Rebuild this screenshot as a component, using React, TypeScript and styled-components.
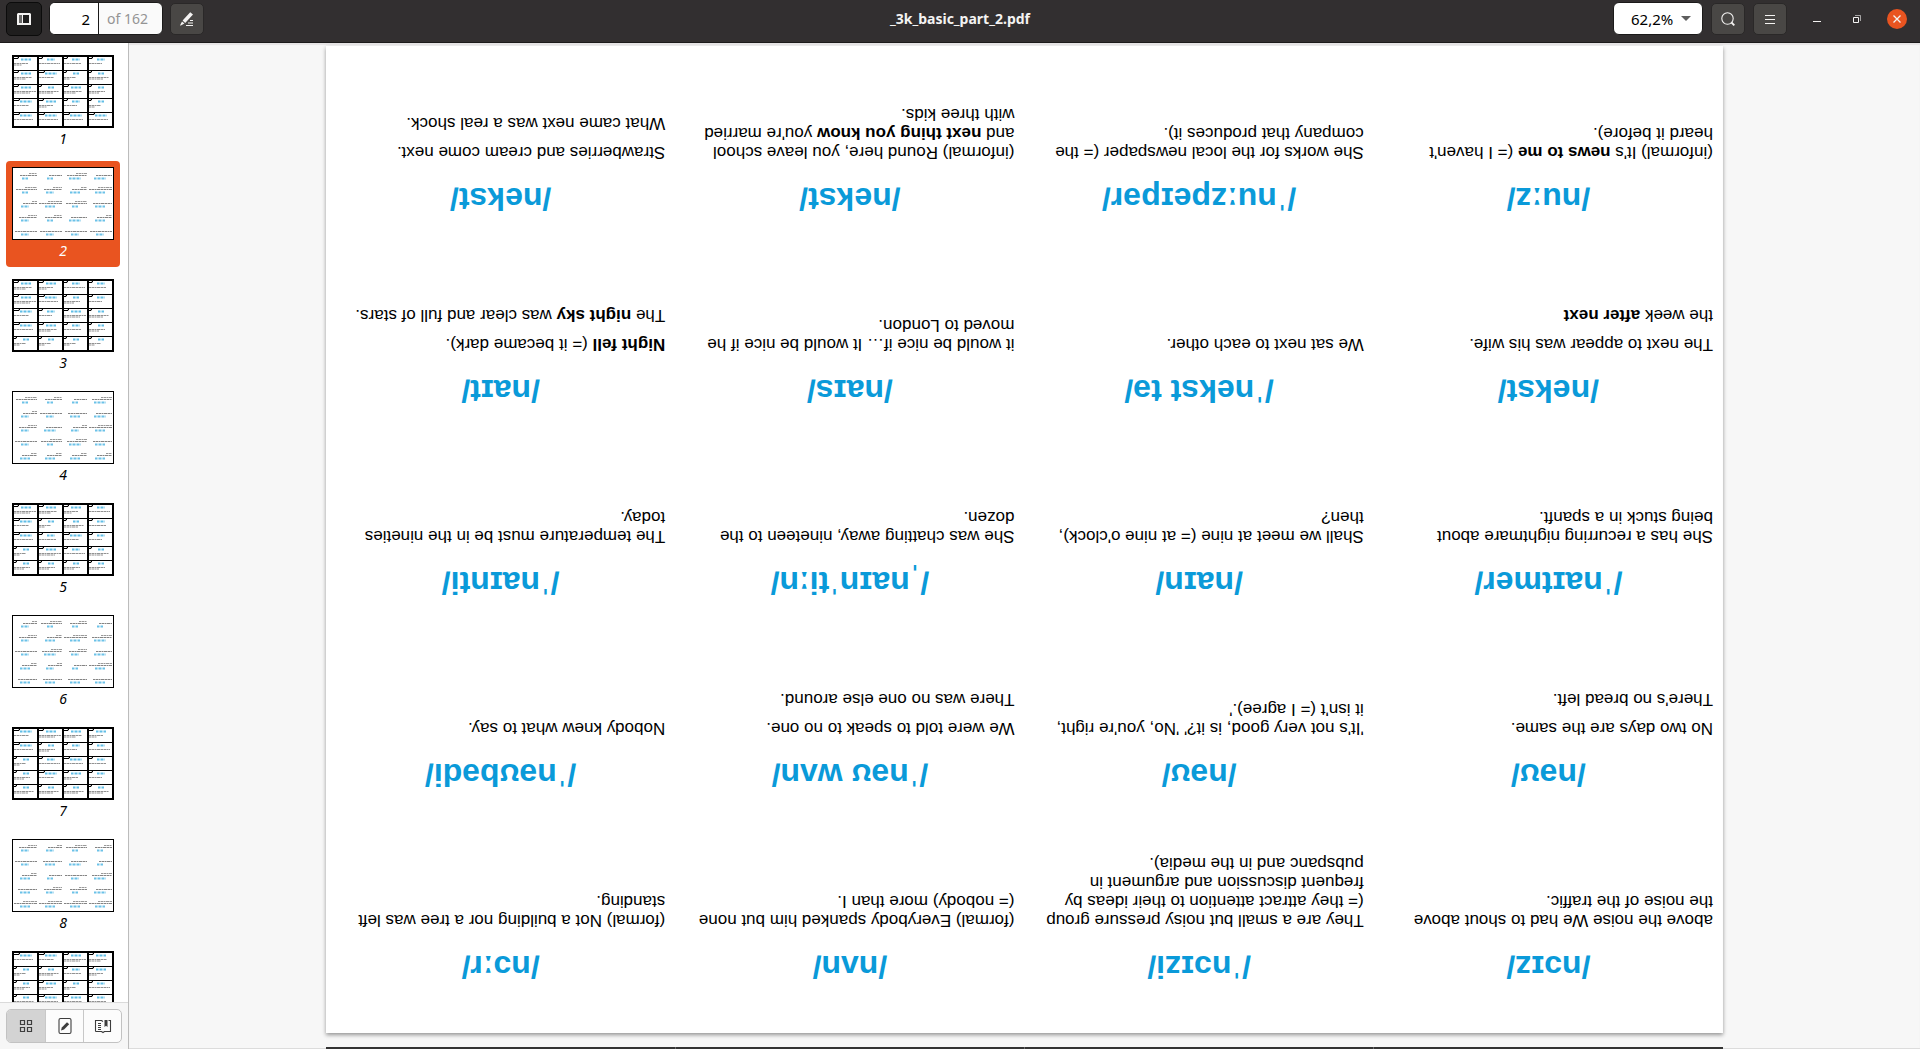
import React from "react";
import styled, { createGlobalStyle } from "styled-components";

const Global = createGlobalStyle`
  *, *::before, *::after { box-sizing: border-box; }
  html, body, #root { height: 100%; }
  body {
    margin: 0;
    overflow: hidden;
    font-family: "Noto Sans", "Open Sans", sans-serif;
    color: #000;
  }
  button, input, select { font: inherit; margin: 0; }
`;

const Window = styled.div`
  height: 100vh;
  display: flex;
  flex-direction: column;
  background: #f6f6f6;
`;

const HeaderBar = styled.header`
  flex: none;
  height: 43px;
  padding: 0 6px 5px;
  display: grid;
  grid-template-columns: 1fr auto 1fr;
  align-items: center;
  background: #322f30;
  border-bottom: 1px solid #1b1a1a;
`;

const HeaderGroup = styled.div<{ $end?: boolean }>`
  display: flex;
  align-items: center;
  gap: ${(p) => (p.$end ? "8px" : "7px")};
  padding-right: ${(p) => (p.$end ? "7px" : "0")};
  justify-content: ${(p) => (p.$end ? "flex-end" : "flex-start")};
`;

const Title = styled.h1`
  margin: 0;
  font-size: 14px;
  line-height: 20px;
  font-weight: 700;
  color: #f4f3f2;
`;

const ToolButton = styled.button<{ $pressed?: boolean }>`
  width: ${(p) => (p.$pressed ? "36px" : "34px")};
  height: ${(p) => (p.$pressed ? "34px" : "32px")};
  padding: 0;
  display: grid;
  place-items: center;
  border-radius: 5px;
  border: 1px solid ${(p) => (p.$pressed ? "#0b0b0b" : "#2a2828")};
  background: ${(p) => (p.$pressed ? "#1f1e1e" : "#494745")};
  color: #f4f3f2;
`;

const PageField = styled.div`
  display: flex;
  height: 33px;
  width: 114px;
  border: 1px solid #1b1a1a;
  border-radius: 6px;
  background: #fafafa;
  overflow: hidden;
`;

const PageInput = styled.input`
  width: 49px;
  padding: 0 8px 0 0;
  border: 0;
  border-right: 1px solid #1b1a1a;
  background: #fff;
  font-size: 15px;
  text-align: right;
  color: #000;
`;

const PageTotal = styled.span`
  padding-left: 8px;
  font-size: 14px;
  line-height: 31px;
  color: #949494;
`;

const ZoomBox = styled.div`
  position: relative;
  display: flex;
  align-items: center;
`;

const ZoomSelect = styled.select`
  appearance: none;
  width: 90px;
  height: 33px;
  padding: 0 0 0 17px;
  border: 1px solid #1b1a1a;
  border-radius: 6px;
  background: #fff;
  color: #000;
  font-size: 15px;
`;

const Caret = styled.span`
  position: absolute;
  right: 12px;
  border: 5px solid transparent;
  border-top-color: #5e5e5e;
  border-bottom: 0;
  pointer-events: none;
`;

const WindowControls = styled.div`
  display: flex;
  align-items: center;
  gap: 20px;
  margin-left: 12px;
`;

const WindowButton = styled.button<{ $close?: boolean }>`
  width: 20px;
  height: 20px;
  padding: 0;
  display: grid;
  place-items: center;
  border: 0;
  border-radius: 50%;
  color: #f4f3f2;
  background: ${(p) => (p.$close ? "#e95420" : "transparent")};
`;

const Body = styled.div`
  flex: 1;
  min-height: 0;
  display: flex;
`;

const Sidebar = styled.aside`
  flex: none;
  width: 129px;
  display: flex;
  flex-direction: column;
  border-right: 1px solid #bcbcbc;
  background: #fff;
`;

const ThumbList = styled.nav`
  flex: 1;
  min-height: 0;
  overflow: hidden;
  padding: 6px 8px 0 6px;
  display: flex;
  flex-direction: column;
  gap: 6px;
`;

const ThumbLink = styled.a<{ $selected?: boolean }>`
  flex: none;
  height: 106px;
  padding-top: 6px;
  display: flex;
  flex-direction: column;
  align-items: center;
  border-radius: 4px;
  text-decoration: none;
  font-size: 14px;
  line-height: 22px;
  font-style: italic;
  background: ${(p) => (p.$selected ? "#e95420" : "transparent")};
  color: ${(p) => (p.$selected ? "#fff" : "#000")};
`;

const Switcher = styled.div`
  flex: none;
  height: 47px;
  padding: 6px;
  background: #f6f6f6;
  border-top: 1px solid #dadada;
`;

const SwitcherGroup = styled.div`
  display: grid;
  grid-template-columns: repeat(3, 1fr);
  height: 34px;
  border: 1px solid #c2c2c2;
  border-radius: 5px;
  overflow: hidden;
  background: #fcfcfc;
`;

const SwitchButton = styled.button<{ $active?: boolean }>`
  padding: 0;
  display: grid;
  place-items: center;
  border: 0;
  color: #3d3d3d;
  background: ${(p) => (p.$active ? "#d3d3d3" : "transparent")};
  & + & { border-left: 1px solid #c8c8c8; }
`;

const Viewer = styled.main`
  flex: 1;
  min-width: 0;
  overflow: hidden;
  padding-top: 3px;
  display: flex;
  flex-direction: column;
  align-items: center;
  gap: 14px;
  background: linear-gradient(#dcdcdc, #dcdcdc) bottom / 100% 1px no-repeat #f7f7f7;
  box-shadow: inset 0 2px 1px #e6e4e5;
`;

const Sheet = styled.article`
  flex: none;
  width: 78%;
  aspect-ratio: 1397 / 987;
  padding-top: 27px;
  background: #fff;
  box-shadow: 0 -2px 4px rgba(0, 0, 0, 0.4);
  transform: rotate(180deg);
  display: grid;
  grid-template-columns: repeat(4, 1fr);
  grid-auto-rows: 192px;
`;

const NextSheet = styled.div`
  flex: none;
  width: 78%;
  height: 40px;
  display: grid;
  grid-template-columns: repeat(4, 1fr);
  gap: 1px;
  background: #666;
`;

const NextCell = styled.div`
  background: #333;
`;

const Card = styled.section`
  padding: 19px 0 0 10px;
  font-family: "Liberation Sans", Arial, sans-serif;
`;

const Phonetic = styled.h2`
  margin: 0 0 17px;
  padding-right: 10px;
  font-size: 32px;
  line-height: 40px;
  font-weight: 700;
  text-align: center;
  color: #0a9ad9;
`;

const Example = styled.p`
  margin: 0 0 10px;
  font-size: 17px;
  line-height: 19px;
  white-space: nowrap;
`;

type CardData = { ipa: string; text: React.ReactNode[][] };

const cards: CardData[] = [
  { ipa: "/nɔɪz/", text: [["above the noise We had to shout above", "the noise of the traffic."]] },
  {
    ipa: "/ˈnɔɪzi/",
    text: [["They are a small but noisy pressure group", "(= they attract attention to their ideas by", "frequent discussion and argument in", "pubspanc and in the media)."]],
  },
  { ipa: "/nʌn/", text: [["(formal) Everybody spanked him but none", "(= nobody) more than I."]] },
  { ipa: "/nɔːr/", text: [["(formal) Not a building nor a tree was left", "standing."]] },
  { ipa: "/nəʊ/", text: [["No two days are the same."], ["There's no bread left."]] },
  { ipa: "/nəʊ/", text: [["'It's not very good, is it?' 'No, you're right,", "it isn't (= I agree).'"]] },
  { ipa: "/ˈnəʊ wʌn/", text: [["We were told to speak to no one."], ["There was no one else around."]] },
  { ipa: "/ˈnəʊbədi/", text: [["Nobody knew what to say."]] },
  { ipa: "/ˈnaɪtmer/", text: [["She has a recurring nightmare about", "being stuck in a spanft."]] },
  { ipa: "/naɪn/", text: [["Shall we meet at nine (= at nine o'clock),", "then?"]] },
  { ipa: "/ˌnaɪnˈtiːn/", text: [["She was chatting away, nineteen to the", "dozen."]] },
  { ipa: "/ˈnaɪnti/", text: [["The temperature must be in the nineties", "today."]] },
  { ipa: "/nekst/", text: [["The next to appear was his wife."], [<>the week <b>after next</b></>]] },
  { ipa: "/ˈnekst tə/", text: [["We sat next to each other."]] },
  { ipa: "/naɪs/", text: [["it would be nice if… It would be nice if he", "moved to London."]] },
  {
    ipa: "/naɪt/",
    text: [[<><b>Night fell</b> (= it became dark).</>], [<>The <b>night sky</b> was clear and full of stars.</>]],
  },
  { ipa: "/nuːz/", text: [[<>(informal) It's <b>news to me</b> (= I haven't</>, "heard it before)."]] },
  { ipa: "/ˈnuːzpeɪpər/", text: [["She works for the local newspaper (= the", "company that produces it)."]] },
  {
    ipa: "/nekst/",
    text: [["(informal) Round here, you leave school", <>and <b>next thing you know</b> you're married</>, "with three kids."]],
  },
  { ipa: "/nekst/", text: [["Strawberries and cream come next."], ["What came next was a real shock."]] },
];

const TEXT_DASH = "2 0.5 3 0.5 1 0.5 4 0.5";
const WORD_DASH = "2 0.5 1 0.5";

/* Miniature of a page: odd pages are bordered word cards, even pages their backs. */
function Thumbnail({ page }: { page: number }) {
  const front = page % 2 === 1;
  const cells = Array.from({ length: 20 }, (_, i) => i);
  return (
    <svg width="102" height="73" viewBox="0 0 102 73" aria-hidden="true">
      <rect width="102" height="73" fill="#000" />
      {!front && <rect x="1" y="1" width="100" height="71" fill="#fff" />}
      {cells.map((i) => {
        const c = i % 4;
        const r = Math.floor(i / 4);
        const seed = (c * 7 + page * 13 + r * 4 + c * r) % 11;
        const word = 6 + (seed % 4) * 2;
        if (front) {
          const x = 2 + c * 25;
          const y = 2 + r * 14;
          const tag = 3 + (seed % 4);
          return (
            <g key={i}>
              <rect x={x} y={y} width="23" height="13" fill="#fff" />
              <path d={`M${x} ${y + 1.5}h${tag - 1}v-1h1`} stroke="#000" fill="none" />
              <path d={`M${x + 12 - word / 2} ${y + 2.5}h${word}`} stroke="#1fa3dc" strokeWidth="2" strokeDasharray={WORD_DASH} opacity="0.7" />
              <path d={`M${x} ${y + 6.5}h${12 + seed}`} stroke="#777" strokeDasharray={TEXT_DASH} opacity="0.8" />
              {seed % 2 === 0 && <path d={`M${x} ${y + 8}h${6 + seed}`} stroke="#777" strokeDasharray={TEXT_DASH} opacity="0.8" />}
            </g>
          );
        }
        const right = 25 + c * 25;
        const y = 5 + r * 14;
        return (
          <g key={i}>
            {seed % 3 !== 0 && <path d={`M${right - 4 - seed} ${y + 1.5}h${4 + seed}`} stroke="#777" strokeDasharray={TEXT_DASH} opacity="0.75" />}
            <path d={`M${right - 13 - seed} ${y + 3.5}h${13 + seed}`} stroke="#777" strokeDasharray={TEXT_DASH} opacity="0.9" />
            <path d={`M${right - 12 - word / 2} ${y + 6.5}h${word}`} stroke="#1fa3dc" strokeWidth="2" strokeDasharray={WORD_DASH} opacity="0.65" />
          </g>
        );
      })}
    </svg>
  );
}

const SidebarIcon = () => (
  <svg width="14" height="12" viewBox="0 0 14 12" aria-hidden="true">
    <path d="M1 0h12l1 1v11H0V1z" fill="#f4f3f2" />
    <path d="M2 2h3v8H2z" fill="#6b6a69" />
    <path d="M6 2h6v8H6z" fill="#1f1e1e" />
  </svg>
);

const AnnotateIcon = () => (
  <svg width="16" height="16" viewBox="0 0 16 16" aria-hidden="true">
    <path d="M11.2 1.2 14 3.6 6.2 12 3.6 9.6zM3 10.4l2.4 2.2L1.4 14.8 1.2 14z" fill="currentColor" />
    <path d="M11 9.500h3M9 12h5M7 14.500h7" stroke="currentColor" strokeWidth="1.200" />
  </svg>
);

const SearchIcon = () => (
  <svg width="16" height="16" viewBox="0 0 16 16" fill="none" stroke="currentColor" aria-hidden="true">
    <circle cx="7.500" cy="7.500" r="5.700" strokeWidth="1.100" />
    <path d="m11.500 11.500 2.800 2.800" strokeWidth="1.800" />
  </svg>
);

const MenuIcon = () => (
  <svg width="16" height="16" viewBox="0 0 16 16" stroke="currentColor" aria-hidden="true">
    <path d="M3 4.500h10M3 8.500h10M3 12.500h10" />
  </svg>
);

const GridIcon = () => (
  <svg width="16" height="16" viewBox="0 0 16 16" fill="none" stroke="currentColor" strokeWidth="1.200" aria-hidden="true">
    <path d="M2.500 2.500h4v4h-4zM9.500 2.500h4v4h-4zM2.500 9.500h4v4h-4zM9.500 9.500h4v4h-4z" />
  </svg>
);

const NoteIcon = () => (
  <svg width="16" height="18" viewBox="0 0 16 18" aria-hidden="true">
    <rect x="2" y="1.500" width="12" height="15" rx="1.500" fill="none" stroke="currentColor" strokeWidth="1.100" />
    <path d="m4 13.500.8-3L10 5.200l2.200 2L7 12.400z" fill="currentColor" />
  </svg>
);

const BookIcon = () => (
  <svg width="18" height="16" viewBox="0 0 18 16" fill="none" stroke="currentColor" strokeWidth="1.100" aria-hidden="true">
    <path d="M1.500 13.500v-11h6l1.500 1M14.500 2.500h2v11h-6L9 14.500l-1.500-1h-6" />
    <path d="M4 5.500h3M4 7.500h3M4 9.500h3M4 11.500h3" />
    <path d="M10.500 2h3v7L12 7.800 10.500 9z" fill="currentColor" stroke="none" />
  </svg>
);

const labelledPages = [1, 2, 3, 4, 5, 6, 7, 8];

export default function App() {
  return (
    <>
      <Global />
      <Window>
        <HeaderBar>
          <HeaderGroup>
            <ToolButton $pressed aria-label="Side pane" aria-pressed="true"><SidebarIcon /></ToolButton>
            <PageField>
              <PageInput aria-label="Page" defaultValue="2" />
              <PageTotal>of 162</PageTotal>
            </PageField>
            <ToolButton aria-label="Annotate"><AnnotateIcon /></ToolButton>
          </HeaderGroup>
          <Title>_3k_basic_part_2.pdf</Title>
          <HeaderGroup $end>
            <ZoomBox>
              <ZoomSelect aria-label="Zoom" defaultValue="62,2%">
                <option>62,2%</option>
                <option>100%</option>
              </ZoomSelect>
              <Caret />
            </ZoomBox>
            <ToolButton aria-label="Find"><SearchIcon /></ToolButton>
            <ToolButton aria-label="Menu"><MenuIcon /></ToolButton>
            <WindowControls>
              <WindowButton aria-label="Minimize">
                <svg width="10" height="10" viewBox="0 0 10 10" stroke="currentColor"><path d="M1 7.500h8" /></svg>
              </WindowButton>
              <WindowButton aria-label="Restore">
                <svg width="10" height="10" viewBox="0 0 10 10" fill="none" stroke="currentColor">
                  <path d="M1.500 3.500h5v5h-5z" />
                  <path d="M3 1.500h5.500V7" opacity="0.6" />
                </svg>
              </WindowButton>
              <WindowButton $close aria-label="Close">
                <svg width="10" height="10" viewBox="0 0 10 10" stroke="currentColor" strokeWidth="1.300"><path d="m1.500 1.500 7 7m0-7-7 7" /></svg>
              </WindowButton>
            </WindowControls>
          </HeaderGroup>
        </HeaderBar>
        <Body>
          <Sidebar>
            <ThumbList aria-label="Page thumbnails">
              {labelledPages.map((n) => (
                <ThumbLink key={n} href={`#page-${n}`} $selected={n === 2}>
                  <Thumbnail page={n} />
                  {n}
                </ThumbLink>
              ))}
              <ThumbLink href="#page-9" aria-label="9">
                <Thumbnail page={9} />
              </ThumbLink>
            </ThumbList>
            <Switcher>
              <SwitcherGroup>
                <SwitchButton $active aria-label="Thumbnails"><GridIcon /></SwitchButton>
                <SwitchButton aria-label="Annotations"><NoteIcon /></SwitchButton>
                <SwitchButton aria-label="Bookmarks"><BookIcon /></SwitchButton>
              </SwitcherGroup>
            </Switcher>
          </Sidebar>
          <Viewer>
            <Sheet>
              {cards.map((card, i) => (
                <Card key={i}>
                  <Phonetic>{card.ipa}</Phonetic>
                  {card.text.map((lines, j) => (
                    <Example key={j}>
                      {lines.map((line, k) => (
                        <React.Fragment key={k}>
                          {k > 0 && <br />}
                          {line}
                        </React.Fragment>
                      ))}
                    </Example>
                  ))}
                </Card>
              ))}
            </Sheet>
            <NextSheet>
              <NextCell /><NextCell /><NextCell /><NextCell />
            </NextSheet>
          </Viewer>
        </Body>
      </Window>
    </>
  );
}
